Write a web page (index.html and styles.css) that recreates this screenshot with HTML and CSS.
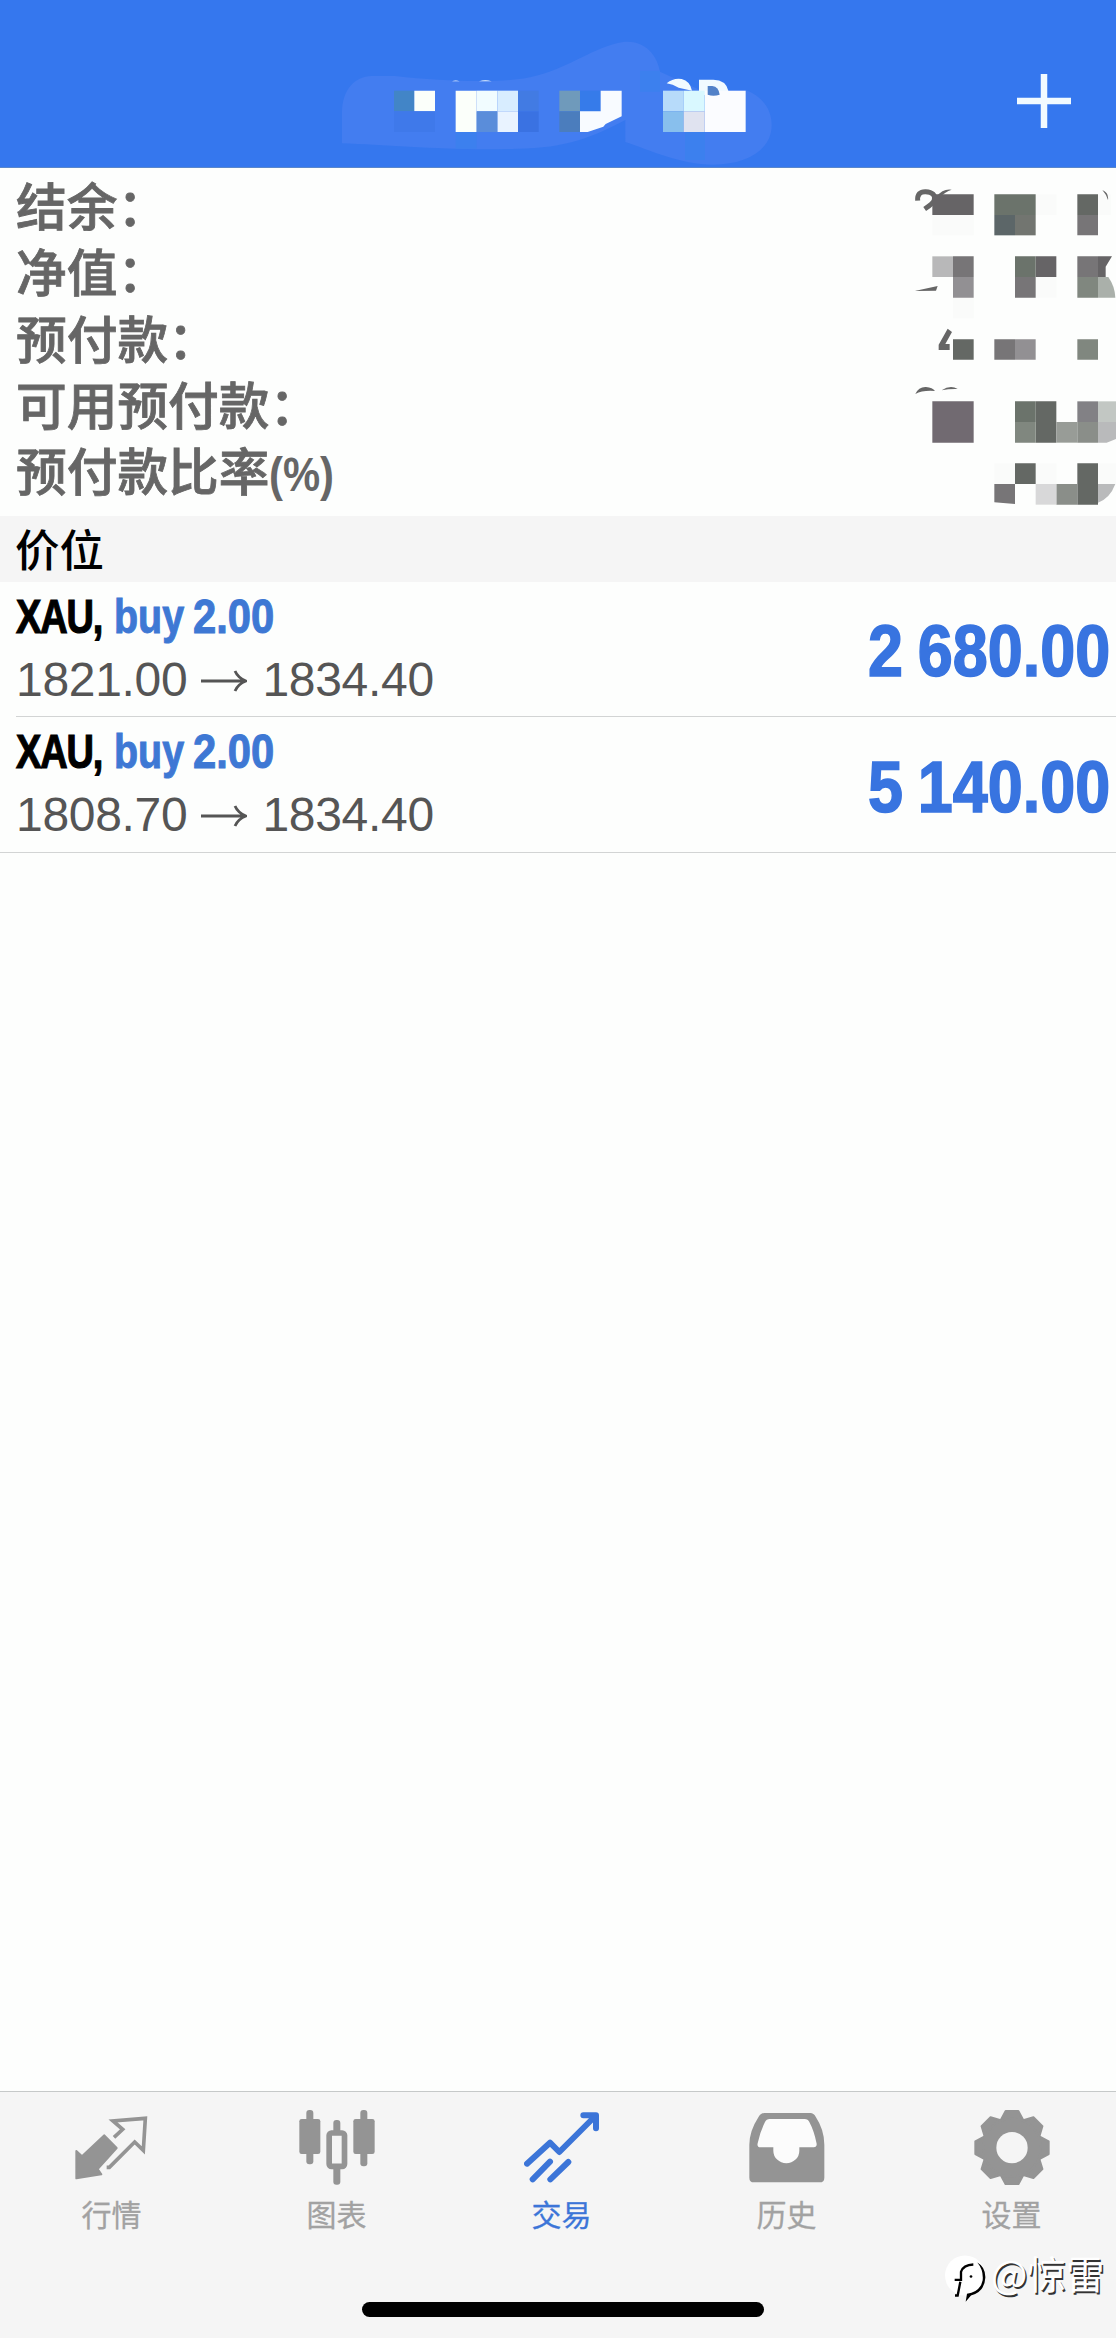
FILE: index.html
```html
<!DOCTYPE html>
<html lang="zh-CN">
<head>
<meta charset="utf-8">
<title>交易</title>
<link rel="stylesheet" href="styles.css">
</head>
<body>
<div class="app">
  <header class="header">
    <svg class="account-mask" viewBox="0 0 1380 390" aria-hidden="true">
      <path fill="#437df0" d="M36 310V215C38 150 72 110 125 108H195C350 125 510 130 600 112C720 85 790 20 880 6C940 0 980 40 990 95L1110 150H1247C1300 170 1325 210 1325 255C1325 330 1250 374 1150 374C1050 374 960 330 886 306V240C790 290 710 325 560 326C380 334 180 315 36 310Z"/>
      <path fill="#3c80ee" d="M930 92H990V155H930ZM377 276H440V326H377ZM1065 276H1125V360H1065Z"/>
      <path fill="#4285c7" d="M192 152H253V214H192Z"/>
      <path fill="#fbfffa" d="M253 152H315V214H253ZM377 152H440V276H377Z"/>
      <path fill="#f1fcff" d="M440 152H502V214H440Z"/>
      <path fill="#d8edff" d="M502 152H564V214H502Z"/>
      <path fill="#e9f3ff" d="M502 214H564V276H502Z"/>
      <path fill="#5a8dda" d="M440 214H502V276H440Z"/>
      <path fill="#427be3" d="M564 152H626V214H564Z"/>
      <path fill="#3a72e2" d="M564 214H626V276H564Z"/>
      <path fill="#3f79ea" d="M192 214H315V276H192Z"/>
      <path fill="#6f9abb" d="M688 152H750V214H688Z"/>
      <path fill="#4b7dbd" d="M688 214H750V276H688Z"/>
      <path fill="#367bea" d="M750 152H812V214H750Z"/>
      <path fill="#f8fbff" d="M812 152H875V229L827 252L820 260L773 276H750V214H812Z"/>
      <path fill="#f1faff" d="M1010 130Q1030 113 1055 117Q1080 123 1086 152L1046 143Q1028 132 1010 130ZM1107 119H1150Q1188 120 1195 152V165H1107ZM366 124Q377 119 389 124ZM447 124Q466 118 485 124Z"/>
      <path fill="#fbfcff" d="M1124 152H1247V276H1124Z"/>
      <path fill="#b7dbfa" d="M999 152H1061V214H999Z"/>
      <path fill="#d9f8ff" d="M1061 152H1124V214H1061Z"/>
      <path fill="#88bfed" d="M999 214H1061V276H999Z"/>
      <path fill="#e0e3f0" d="M1061 214H1124V276H1061Z"/>
      <path fill="#5281c8" d="M1133 138H1147Q1166 140 1169 164Q1150 170 1133 164Z"/>
    </svg>
    <svg class="add" viewBox="0 0 56 56" aria-label="添加"><path d="M28 1V55M1 28H55"/></svg>
  </header>

  <section class="summary">
    <dl class="labels">
      <dt>结余：</dt>
      <dt>净值：</dt>
      <dt>预付款：</dt>
      <dt>可用预付款：</dt>
      <dt>预付款比率<span class="percent">(%)</span></dt>
    </dl>
    <svg class="values-mask" viewBox="0 384 708 1044" aria-hidden="true">
      <path fill="#fafbfa" d="M157 525H281V586H157ZM467 463H529V525H467ZM654 463H692V525H654ZM467 711H529V773H467ZM219 773H281V835H219ZM343 1270H405V1332H343ZM467 1270H529V1332H467ZM654 1270H708V1332H654Z"/>
      <path fill="none" stroke="#666" stroke-width="15" d="M113 482Q111 454 137 455Q168 457 163 480Q160 490 134 507"/>
      <path fill="#666" d="M170 470Q188 445 215 449Q195 455 180 472ZM667 450Q687 458 684 480Q679 463 667 450ZM104 753L173 738L168 752ZM203 866L216 876L196 912H209V930H176V914ZM106 1062Q116 1040 138 1041Q158 1043 165 1053Q128 1050 106 1062ZM185 1051Q211 1034 233 1047Q208 1046 185 1051Z"/>
      <path fill="#666466" d="M157 463H281V525H157ZM467 649H529V711H467ZM654 649H696L677 680V711H654Z"/>
      <path fill="#6b736b" d="M343 463H467V525H343ZM405 649H467V711H405ZM405 1084H467V1146H405Z"/>
      <path fill="#5c6668" d="M343 525H405V586H343Z"/>
      <path fill="#727570" d="M405 525H467V586H405Z"/>
      <path fill="#646864" d="M592 463H654V525H592ZM219 898H281V959H219ZM467 1084H529V1208H467ZM405 1270H467V1332H405ZM592 1270H654V1394H592Z"/>
      <path fill="#777577" d="M592 525H654V586H592ZM219 649H281V711H219ZM405 711H467V773H405ZM592 649H654V711H592ZM343 898H405V959H343ZM343 1332H405V1392L343 1387Z"/>
      <path fill="#b8b8b9" d="M157 649H219V711H157Z"/>
      <path fill="#929093" d="M219 711H281V773H219ZM405 898H467V959H405Z"/>
      <path fill="#80877f" d="M592 711H654V773H592ZM592 898H654V959H592ZM405 1146H467V1208H405Z"/>
      <path fill="#aab0aa" d="M654 711H685Q705 740 706 773H654Z"/>
      <path fill="#716a71" d="M157 1084H281V1208H157Z"/>
      <path fill="#828185" d="M592 1084H654V1146H592Z"/>
      <path fill="#c2c7c3" d="M654 1084H708V1146H654Z"/>
      <path fill="#989c97" d="M529 1146H592V1208H529Z"/>
      <path fill="#8a8e89" d="M592 1146H654V1208H592ZM529 1332H592V1394H529Z"/>
      <path fill="#b9babb" d="M654 1146H708V1197L680 1208H654ZM654 1332H706Q690 1375 654 1388Z"/>
      <path fill="#d8d8d9" d="M467 1332H529V1394H467Z"/>
    </svg>
  </section>

  <h2 class="section-title">价位</h2>

  <main class="positions">
    <article class="position">
      <div class="details">
        <div class="order"><b class="symbol">XAU,</b><b class="side">buy</b><b class="volume">2.00</b></div>
        <div class="prices">1821.00<svg class="arrow" viewBox="0 0 46 22"><path d="M0 11H45M34 1Q37 8 45 11Q37 14 34 21"/></svg>1834.40</div>
      </div>
      <div class="profit"><span>2 680.00</span></div>
    </article>
    <article class="position">
      <div class="details">
        <div class="order"><b class="symbol">XAU,</b><b class="side">buy</b><b class="volume">2.00</b></div>
        <div class="prices">1808.70<svg class="arrow" viewBox="0 0 46 22"><path d="M0 11H45M34 1Q37 8 45 11Q37 14 34 21"/></svg>1834.40</div>
      </div>
      <div class="profit"><span>5 140.00</span></div>
    </article>
  </main>

  <nav class="tabbar">
    <a class="tab">
      <svg class="icon" viewBox="222 88 228 228"><path fill="currentColor" stroke="currentColor" stroke-width="6" stroke-linejoin="round" d="M313 167L350 205L293 268L304 284L229 296V214L246 230Z"/><path fill="none" stroke="currentColor" stroke-width="11" d="M342 173L368 149L339 124L436 116L430 212L404 187L328 263H320"/></svg>
      <span>行情</span>
    </a>
    <a class="tab">
      <svg class="icon" viewBox="896 88 228 228"><g fill="currentColor"><rect x="918" y="91" width="21" height="163" rx="9"/><rect x="897" y="118" width="63" height="105" rx="7"/><rect x="1080" y="91" width="21" height="169" rx="9"/><rect x="1059" y="118" width="64" height="105" rx="7"/><rect x="999" y="121" width="21" height="40" rx="9"/><rect x="999" y="260" width="21" height="55" rx="9"/></g><rect x="986.500" y="160" width="46" height="100" rx="7" fill="none" stroke="currentColor" stroke-width="17"/></svg>
      <span>图表</span>
    </a>
    <a class="tab active">
      <svg class="icon" viewBox="132 88 228 228"><g fill="none" stroke="currentColor" stroke-width="18" stroke-linecap="round" stroke-linejoin="round"><path d="M141 252L210 189L238 217L343 112M310 107H348V146M158 299L210 246M211 299L265 247"/></g><path fill="currentColor" d="M320 107H349V138Z"/></svg>
      <span>交易</span>
    </a>
    <a class="tab">
      <svg class="icon" viewBox="806 88 228 228"><path fill="currentColor" d="M852 100H990Q1000 100 1006 111Q1032 150 1032 195V294Q1032 308 1018 308H821Q807 308 807 294V195Q807 154 835 111Q842 100 852 100Z"/><path fill="#fcfcfc" d="M868 118H973Q983 118 987 127Q1001 153 1009 192Q1010 203 1000 203H957V213A39 38 0 0 1 879 213V203H841Q829 203 832 191Q839 157 854 127Q858 118 868 118Z"/></svg>
      <span>历史</span>
    </a>
    <a class="tab">
      <svg class="icon" viewBox="-114 -116 228 228"><g fill="currentColor" stroke="currentColor" stroke-width="6" stroke-linejoin="round"><path id="teeth" d="M-19 -110H19L34 -82V82L19 110H-19L-34 82V-82Z"/><use href="#teeth" transform="rotate(45)"/><use href="#teeth" transform="rotate(90)"/><use href="#teeth" transform="rotate(135)"/><circle r="87"/></g><circle r="47" fill="#f5f5f5"/></svg>
      <span>设置</span>
    </a>
  </nav>
  <div class="home-indicator"></div>
  <div class="watermark">
    <svg viewBox="0 0 126 140" aria-hidden="true"><circle cx="60" cy="61" r="60" fill="#fff"/><path fill="#fff" d="M60 116L66 139L92 112Z"/><path fill="none" stroke="#000" stroke-width="7" d="M29 74H48V50Q55 29 85 28M46 80L38 121H30"/><path d="M97 22Q122 36 121 68Q119 110 78 121L62 140L66 116Q106 110 113 75Q116 45 97 22Z"/><circle cx="78" cy="64" r="4"/></svg>
    <span>@惊雷</span>
  </div>
</div>
</body>
</html>
```
FILE: styles.css
```css
* { box-sizing: border-box; }
body { margin: 0; background: #fdfefd; }
.app {
  position: relative;
  display: flex;
  flex-direction: column;
  width: 1116px;
  height: 2338px;
  overflow: hidden;
  font-family: "Liberation Sans", "Noto Sans CJK SC", sans-serif;
}
svg { display: block; flex: none; }

.header {
  display: flex;
  align-items: flex-start;
  height: 168px;
  padding: 40px 44px 0 330px;
  background: #3577ee;
  border-bottom: 1px solid #5a87cb;
  flex: none;
}
.account-mask { width: 460px; height: 130px; margin-bottom: -3px; }
.add { width: 56px; height: 56px; margin: 33px 0 0 auto; }
.add path { stroke: #f1faff; stroke-width: 6.5; }

.summary {
  display: flex;
  justify-content: space-between;
  height: 348px;
  flex: none;
}
.labels {
  margin: 0;
  padding: 3px 0 0 16px;
  color: #666;
  font: 500 50.7px/66.3px "Noto Sans CJK SC", sans-serif;
  -webkit-text-stroke: .8px #666;
  white-space: nowrap;
}
.percent {
  display: inline-block;
  font-family: "Liberation Sans", sans-serif;
  font-weight: 700;
  font-size: 48px;
  -webkit-text-stroke: 0;
  transform: scaleX(.87);
  transform-origin: left;
}
.values-mask { width: 236px; height: 348px; }

.section-title {
  height: 66px;
  margin: 0;
  padding-left: 15px;
  background: #f5f5f5;
  color: #000;
  font: 500 44.5px/63px "Noto Sans CJK SC", sans-serif;
  flex: none;
}

.position {
  display: flex;
  justify-content: space-between;
  height: 135px;
  margin-left: 16px;
  border-bottom: 1px solid #d2d4d4;
}
.position:last-child {
  height: 136px;
  margin-left: 0;
  padding-left: 16px;
}
.details { padding-top: 3px; }
.order {
  display: flex;
  height: 63px;
  font-size: 47.5px;
  line-height: 63px;
}
.order b { transform-origin: left; }
.symbol {
  width: 98px;
  color: #000;
  letter-spacing: -1.5px;
  -webkit-text-stroke: 1.2px #000;
  transform: scaleX(.8);
}
.side, .volume {
  color: #3e78d4;
  -webkit-text-stroke: 1px #3e78d4;
}
.side { width: 79px; transform: scaleX(.83); }
.volume { transform: scaleX(.88); }
.prices {
  display: flex;
  align-items: center;
  color: #555;
  font-size: 48px;
  line-height: 63px;
  letter-spacing: -.3px;
}
.arrow {
  width: 46px;
  height: 22px;
  margin: 2px 15px 0 14px;
}
.arrow path { fill: none; stroke: #555; stroke-width: 2.8; }
.profit {
  display: flex;
  align-items: center;
  padding: 4px 6px 0 0;
  color: #3874e0;
  font-size: 71.5px;
  font-weight: 700;
  word-spacing: -3px;
  -webkit-text-stroke: 1.6px #3874e0;
  white-space: nowrap;
}
.profit span { transform: scaleX(.88); transform-origin: right; }

.tabbar {
  display: flex;
  height: 247px;
  margin-top: auto;
  background: #f5f5f5;
  border-top: 1px solid #c6c9c9;
  flex: none;
}
.tab {
  display: flex;
  flex: 0 0 225px;
  flex-direction: column;
  align-items: center;
  padding: 17px 2px 0 0;
  color: #949494;
  font: 400 30px/44px "Noto Sans CJK SC", sans-serif;
}
.icon { width: 76px; height: 76px; margin-bottom: 6px; }
.tab span { color: #a2a2a2; -webkit-text-stroke: .3px; }
.tab.active, .tab.active span { color: #3c75d8; }

.home-indicator {
  position: absolute;
  bottom: 21px;
  left: 362px;
  width: 402px;
  height: 15px;
  border-radius: 8px;
  background: #000;
}
.watermark {
  position: absolute;
  top: 2255px;
  left: 945px;
  display: flex;
  gap: 4px;
  color: #fff;
  font: 400 38.5px/34px "Noto Sans CJK SC", sans-serif;
  text-shadow: 1.5px 1.5px 0 #333;
  white-space: nowrap;
}
.watermark svg { width: 42px; height: 47px; }
```
